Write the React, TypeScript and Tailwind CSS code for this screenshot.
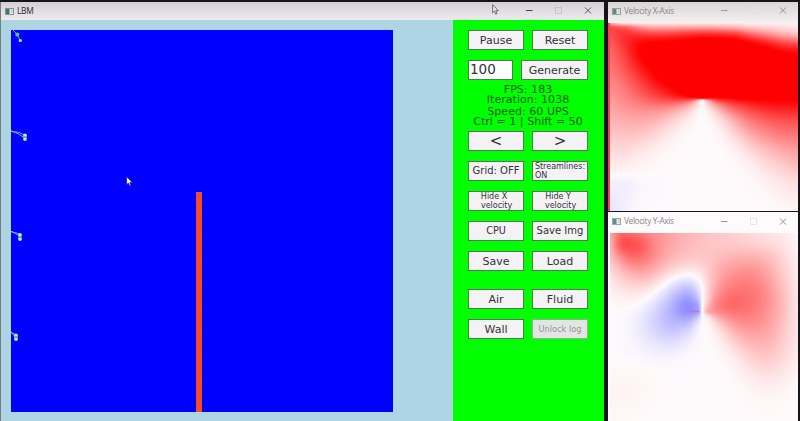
import { useLayoutEffect, useRef } from "react";
import type { ReactNode } from "react";

type Field = { xs: number[]; ys: number[]; values: number[][] };

const COLUMNS = [12, 59, 106, 153, 200, 247, 280, 294, 308, 341, 388, 435, 482, 529, 576];

const FIELD_X: Field = {
  xs: COLUMNS.map((x) => (x - 18) / 3),
  ys: [15, 30, 50, 70, 100, 150, 200, 238, 246, 275, 300, 350, 400, 450, 500, 575].map((y) => (y - 15) / 3),
  values: [
    [0.4, 0.15, 0.1, 0.1, 0.1, 0.1, 0.1, 0.1, 0.1, 0.1, 0.1, 0.06, 0.05, 0.05, 0.05],
    [0.75, 0.7, 0.5, 0.4, 0.4, 0.42, 0.42, 0.42, 0.42, 0.4, 0.35, 0.25, 0.2, 0.15, 0.1],
    [0.65, 0.82, 0.82, 0.8, 0.82, 0.88, 0.9, 0.91, 0.91, 0.9, 0.87, 0.67, 0.5, 0.35, 0.25],
    [0.6, 0.82, 0.96, 1, 1.02, 1.05, 1.08, 1.1, 1.1, 1.1, 1.06, 0.98, 0.85, 0.7, 0.6],
    [0.55, 0.76, 1, 1.1, 1.2, 1.2, 1.2, 1.2, 1.2, 1.2, 1.2, 1.15, 1.1, 1, 0.95],
    [0.5, 0.66, 0.88, 1.05, 1.2, 1.2, 1.2, 1.2, 1.2, 1.2, 1.2, 1.2, 1.2, 1.2, 1.1],
    [0.42, 0.54, 0.71, 0.89, 1.02, 1.15, 1.2, 1.2, 1.2, 1.2, 1.2, 1.2, 1.2, 1.2, 1.1],
    [0.38, 0.47, 0.58, 0.7, 0.84, 0.98, 1, 1, 1, 1.05, 1.05, 1.05, 1.05, 1.04, 1.02],
    [0.36, 0.45, 0.54, 0.64, 0.68, 0.6, 0.25, 0.02, 0.3, 0.68, 0.88, 0.96, 0.99, 1, 1],
    [0.32, 0.38, 0.42, 0.42, 0.35, 0.2, 0.04, 0, 0.05, 0.25, 0.55, 0.7, 0.8, 0.85, 0.85],
    [0.28, 0.32, 0.34, 0.3, 0.2, 0.08, 0.01, 0, 0.01, 0.1, 0.34, 0.54, 0.64, 0.7, 0.72],
    [0.2, 0.22, 0.2, 0.14, 0.06, 0.01, 0, 0, 0, 0.02, 0.13, 0.3, 0.42, 0.5, 0.52],
    [0.12, 0.12, 0.08, 0.04, 0.01, 0, 0, 0, 0, 0, 0.03, 0.12, 0.22, 0.3, 0.36],
    [0.05, 0.04, 0.02, 0.01, 0, 0, 0, 0, 0, 0, 0.01, 0.03, 0.1, 0.16, 0.22],
    [-0.04, -0.05, -0.02, -0.01, 0, 0, 0, 0, 0, 0, 0, 0.01, 0.03, 0.07, 0.1],
    [-0.1, -0.04, 0, 0, 0, 0, 0, 0, 0, 0, 0, 0, 0, 0.01, 0.02],
  ],
};

const FIELD_Y: Field = {
  xs: COLUMNS.map((x) => (x - 18) / 3),
  ys: [24, 60, 100, 140, 180, 215, 240, 258, 275, 300, 350, 400, 450, 500, 588].map((y) => (y - 24) / 3),
  values: [
    [0.3, 0.6, 0.52, 0.42, 0.35, 0.28, 0.25, 0.23, 0.22, 0.2, 0.17, 0.13, 0.1, 0.07, 0.02],
    [0.18, 0.72, 0.66, 0.45, 0.33, 0.26, 0.23, 0.22, 0.21, 0.2, 0.2, 0.18, 0.15, 0.1, 0.03],
    [0.08, 0.5, 0.58, 0.4, 0.28, 0.21, 0.2, 0.2, 0.21, 0.25, 0.3, 0.32, 0.28, 0.17, 0.04],
    [0.05, 0.26, 0.35, 0.27, 0.12, 0.04, 0.06, 0.11, 0.17, 0.3, 0.42, 0.44, 0.36, 0.2, 0.05],
    [0.03, 0.13, 0.17, 0.07, -0.09, -0.2, -0.08, 0, 0.14, 0.36, 0.5, 0.52, 0.43, 0.25, 0.06],
    [0.01, 0.05, 0.03, -0.05, -0.22, -0.36, -0.22, 0, 0.14, 0.45, 0.58, 0.56, 0.46, 0.28, 0.07],
    [0, 0.01, -0.01, -0.12, -0.28, -0.44, -0.35, 0, 0.22, 0.5, 0.6, 0.56, 0.46, 0.28, 0.07],
    [0, 0, -0.03, -0.16, -0.3, -0.43, -0.38, 0, 0.3, 0.45, 0.54, 0.53, 0.43, 0.28, 0.07],
    [0, -0.01, -0.07, -0.18, -0.28, -0.35, -0.2, 0, 0.06, 0.32, 0.47, 0.5, 0.42, 0.27, 0.07],
    [0, -0.01, -0.07, -0.17, -0.25, -0.22, -0.06, 0, 0.01, 0.14, 0.36, 0.43, 0.38, 0.25, 0.07],
    [0, -0.01, -0.04, -0.09, -0.12, -0.06, -0.01, 0, 0, 0.03, 0.16, 0.28, 0.3, 0.2, 0.06],
    [0, 0, -0.01, -0.02, -0.02, 0, 0, 0, 0, 0, 0.05, 0.15, 0.2, 0.15, 0.04],
    [0.01, 0.02, 0.02, 0.01, 0, 0, 0, 0, 0, 0, 0.01, 0.06, 0.1, 0.08, 0.02],
    [0.02, 0.03, 0.02, 0.01, 0, 0, 0, 0, 0, 0, 0, 0.02, 0.03, 0.02, 0],
    [0.01, 0.01, 0, 0, 0, 0, 0, 0, 0, 0, 0, 0, 0, 0, 0],
  ],
};

/** The wall's upper end, where the flow changes most sharply. */
const TIP = { x: 92, y: 77 };

/** Monotone cubic interpolation through the samples (xs, vs). */
function interpolate(xs: number[], vs: number[], x: number): number {
  const last = xs.length - 1;
  if (x <= xs[0]) return vs[0];
  if (x >= xs[last]) return vs[last];
  let i = 0;
  while (x > xs[i + 1]) i++;
  const slope = (k: number) => (vs[k + 1] - vs[k]) / (xs[k + 1] - xs[k]);
  const tangent = (k: number) => {
    if (k === 0) return slope(0);
    if (k === last) return slope(last - 1);
    const a = slope(k - 1);
    const b = slope(k);
    return a * b <= 0 ? 0 : (2 * a * b) / (a + b);
  };
  const h = xs[i + 1] - xs[i];
  const t = (x - xs[i]) / h;
  const t2 = t * t;
  const t3 = t2 * t;
  return (
    (2 * t3 - 3 * t2 + 1) * vs[i] +
    (t3 - 2 * t2 + t) * h * tangent(i) +
    (3 * t2 - 2 * t3) * vs[i + 1] +
    (t3 - t2) * h * tangent(i + 1)
  );
}

/** Three rings of sample offsets used to average the field round a point. */
const KERNEL = [0.35, 0.7, 1].flatMap((r, ring) =>
  Array.from({ length: 12 }, (_, k) => {
    const angle = ((k + ring / 2) * Math.PI) / 6;
    return [r * Math.cos(angle), r * Math.sin(angle)];
  }),
);

function HeatMap({ field, width, height, smoothing }: { field: Field; width: number; height: number; smoothing: number }) {
  const ref = useRef<HTMLCanvasElement>(null);
  useLayoutEffect(() => {
    const context = ref.current?.getContext("2d");
    if (!context) return;
    const raw = new Float32Array(width * height);
    for (let x = 0; x < width; x++) {
      const column = field.values.map((row) => interpolate(field.xs, row, x));
      for (let y = 0; y < height; y++) raw[y * width + x] = interpolate(field.ys, column, y);
    }
    const at = (x: number, y: number) =>
      raw[Math.max(0, Math.min(height - 1, Math.round(y))) * width + Math.max(0, Math.min(width - 1, Math.round(x)))];
    const image = context.createImageData(width, height);
    for (let y = 0; y < height; y++) {
      for (let x = 0; x < width; x++) {
        const radius = Math.min(smoothing, Math.hypot(x - TIP.x, y - TIP.y) / 4, y / 2);
        let sum = at(x, y);
        for (const [dx, dy] of KERNEL) sum += at(x + dx * radius, y + dy * radius);
        const v = Math.max(-1, Math.min(1, sum / (KERNEL.length + 1)));
        const fade = 1 - Math.abs(v);
        const p = (y * width + x) * 4;
        image.data[p] = v > 0 ? 254 : 253 * fade;
        image.data[p + 1] = 250 * fade;
        image.data[p + 2] = v < 0 ? 253 : 251 * fade;
        image.data[p + 3] = 255;
      }
    }
    context.putImageData(image, 0, 0);
  }, [field, width, height, smoothing]);
  return <canvas ref={ref} width={width} height={height} className="block" />;
}

function TitleBar({ title, muted, className }: { title: string; muted?: boolean; className: string }) {
  return (
    <div className={`flex shrink-0 items-center ${className}`}>
      <svg width="9" height="7" viewBox="0 0 9 7" className={muted ? "opacity-80" : ""}>
        <rect x="0.5" y="0.5" width="8" height="6" fill="#e7eaea" stroke="#8b9292" />
        <rect x="1" y="1" width="3.5" height="5" fill="#39796d" />
        <path d="M6 2h1.5M6 4h1.5" stroke="#a5aaaa" />
      </svg>
      <span
        className={`ml-[3px] font-['Open_Sans',sans-serif] text-[8.3px] leading-none whitespace-nowrap ${
          muted ? "tracking-[-0.36px] text-[#88868b]" : "tracking-[-0.25px] text-[#29272a]"
        }`}
      >
        {title}
      </span>
      <svg width="66" height="10" viewBox="0 0 66 10" fill="none" className="ml-auto shrink-0">
        <path d="M0 4.5h6.500" stroke={muted ? "#98969a" : "#454346"} />
        <rect x="29.500" y="1.500" width="6" height="6" stroke={muted ? "#e4e1e4" : "#c2bec1"} strokeWidth="0.8" />
        <path d="m59 1.500 6 6m0-6-6 6" stroke={muted ? "#88868a" : "#454346"} strokeWidth="0.9" />
      </svg>
    </div>
  );
}

function Button({
  children,
  disabled,
  className = "w-14 text-[11px]",
}: {
  children: ReactNode;
  disabled?: boolean;
  className?: string;
}) {
  return (
    <button
      disabled={disabled}
      className={`flex h-5 shrink-0 items-center justify-center border border-[#4f7a50] bg-[#f4f2f4] p-0 leading-none whitespace-nowrap text-[#333335] disabled:border-[#8fae8f] disabled:bg-[#e4e4e4] disabled:text-[#949494] ${className}`}
    >
      {children}
    </button>
  );
}

function Row({ children, className = "mb-[10px]" }: { children: ReactNode; className?: string }) {
  return <div className={`flex gap-2 ${className}`}>{children}</div>;
}

function Pointer({ className, fill, stroke }: { className: string; fill: string; stroke: string }) {
  return (
    <svg width="7" height="11" viewBox="0 0 7 11" className={`absolute ${className}`}>
      <path d="M.6.6v8.2l1.8-1.7 1.3 3 1.3-.6-1.2-2.9h2.5z" fill={fill} stroke={stroke} strokeWidth="0.8" />
    </svg>
  );
}

function Simulation() {
  return (
    <svg width="382" height="382" viewBox="0 0 382 382" className="shrink-0 bg-[#0000ff]">
      <path
        d="M47 49.5h3M95 49.5h3M143 49.5h3M47 96.5h3M95 96.5h3M143 96.5h3M47 144h2M95 144h2M143 143.5h2"
        stroke="#0000c8"
      />
      <path
        d="M2 0Q6 3 9 10M0 101q9 1 14 4M0 101q7 2 14 7M0 201.500 9 204M0 201.500q5 2 9 5M0 302l5 3M0 302q3 3 5 7"
        fill="none"
        stroke="#a6c6e8"
        strokeWidth="0.8"
      />
      <g fill="#b5f0d4">
        <circle cx="9.300" cy="10.500" r="1.600" />
        <circle cx="14" cy="105.500" r="1.900" />
        <circle cx="14" cy="109" r="1.900" />
        <circle cx="9" cy="205" r="1.900" />
        <circle cx="9" cy="209" r="1.900" />
        <circle cx="5" cy="305.500" r="1.900" />
        <circle cx="5" cy="309" r="1.900" />
      </g>
      <g fill="#4fd24a">
        <circle cx="6.300" cy="4.500" r="2" />
        <rect x="12.500" y="106" width="3" height="2" />
        <rect x="7.500" y="206" width="3" height="2" />
        <rect x="3.500" y="306" width="3" height="2" />
      </g>
      <rect x="185" y="162" width="6" height="220" fill="#ff4a1c" />
      <path d="M185.500 162v220M190.500 162v220" stroke="#a04a68" strokeDasharray="1 1" opacity="0.5" />
      <path d="M185 162.500h6" stroke="#a06aa0" />
      <path d="M192.500 164v218" stroke="#0000d0" strokeDasharray="1 2" />
    </svg>
  );
}

export default function App() {
  return (
    <div className="flex h-[421px] w-[800px] overflow-hidden bg-[#17131b] pt-[2px] font-['DejaVu_Sans',sans-serif]">
      <main className="relative flex w-[604px] shrink-0 flex-col border-l border-[#777d83]">
        <TitleBar title="LBM" className="h-[18px] bg-linear-to-b from-[#d4cfd3] to-[#eeebed] pr-3 pl-1" />
        <div className="flex min-h-0 flex-1">
          <section className="w-[452px] shrink-0 bg-[#add5e3] pt-[10px] pl-[10px]">
            <Simulation />
          </section>
          <aside className="flex flex-1 flex-col bg-[#00ff00] pt-[10px] pl-[15px]">
            <Row>
              <Button>Pause</Button>
              <Button>Reset</Button>
            </Row>
            <Row className="mb-[5px]">
              <input
                readOnly
                value="100"
                className="h-5 w-[45px] border border-[#4f7a50] bg-white p-0 pb-[3px] pl-px text-[13.5px] leading-none text-[#333335]"
              />
              <Button className="w-[67px] text-[11px]">Generate</Button>
            </Row>
            <div className="w-[120px] text-center text-[11px] leading-[10px] tracking-[0.04px] whitespace-nowrap text-[#075a07]">
              <p>FPS: 183</p>
              <p className="mb-[2px]">Iteration: 1038</p>
              <p>Speed: 60 UPS</p>
              <p className="mb-[4px]">Ctrl = 1 | Shift = 50</p>
            </div>
            <Row>
              <Button className="w-14 text-[15px]">&lt;</Button>
              <Button className="w-14 text-[15px]">&gt;</Button>
            </Row>
            <Row>
              <Button className="w-14 text-[10px]">Grid: OFF</Button>
              <Button className="w-14 text-[8px]">
                <span className="text-left leading-[9.5px]">Streamlines:<br />ON</span>
              </Button>
            </Row>
            <Row>
              <Button className="w-14 text-[8px]">
                <span className="pr-1 leading-[9.5px]">Hide X<br />&nbsp; velocity</span>
              </Button>
              <Button className="w-14 text-[8px]">
                <span className="pr-1 leading-[9.5px]">Hide Y<br />&nbsp; velocity</span>
              </Button>
            </Row>
            <Row>
              <Button className="w-14 text-[9.7px]">CPU</Button>
              <Button className="w-14 text-[10px]">Save Img</Button>
            </Row>
            <Row className="mb-[18px]">
              <Button>Save</Button>
              <Button>Load</Button>
            </Row>
            <Row>
              <Button>Air</Button>
              <Button>Fluid</Button>
            </Row>
            <Row>
              <Button>Wall</Button>
              <Button disabled className="w-14 text-[8.2px]">Unlock log</Button>
            </Row>
          </aside>
        </div>
        <Pointer className="top-[2px] left-[491px]" fill="#e8e5e8" stroke="#555158" />
        <Pointer className="top-[174px] left-[125px]" fill="#ffffff" stroke="#20208a" />
      </main>
      <div className="ml-1 flex w-[190px] shrink-0 flex-col">
        <section className="h-[209px] shrink-0 overflow-hidden bg-[#fdfafc]">
          <TitleBar
            title="Velocity X-Axis"
            muted
            className="h-[21px] bg-linear-to-b from-[#d8d5d7] to-[#f6f1f1] pr-[11px] pb-[3px] pl-1"
          />
          <div className="border-l-2 border-[#f0444c]">
            <HeatMap field={FIELD_X} width={188} height={188} smoothing={6} />
          </div>
        </section>
        <section className="mt-px min-h-0 flex-1 overflow-hidden bg-[#fdfafb] pl-[2px]">
          <TitleBar title="Velocity Y-Axis" muted className="h-[21px] bg-[#fdfbfc] pr-[11px] pb-[2px] pl-[2px]" />
          <div className="relative">
            <HeatMap field={FIELD_Y} width={188} height={188} smoothing={13} />
            <svg width="14" height="3" viewBox="0 0 14 3" className="absolute top-[77px] left-[77px]">
              <path d="M0 1.500h1M3 1h1M5 1.500h2M8 1h1M10 1.500h2" stroke="#e8608c" />
            </svg>
          </div>
        </section>
      </div>
    </div>
  );
}
